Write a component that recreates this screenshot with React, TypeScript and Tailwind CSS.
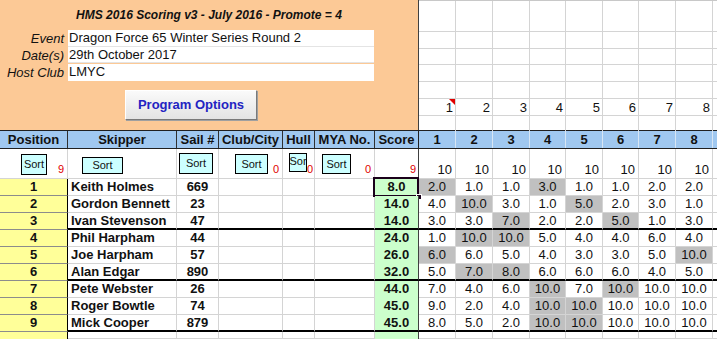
import React from 'react';

// Excel-style scoring sheet: HMS 2016 scoring, DF65 winter series

const GRID =
  'grid grid-cols-[68px_109px_42px_64px_32px_60px_44px_37px_37px_37px_36px_37px_36px_37px_37px_1fr]';
const RACE_GRID = 'grid grid-cols-[37px_37px_37px_36px_37px_36px_37px_37px_1fr]';

interface Entry {
  pos: number;
  name: string;
  sail: string;
  score: string;
  results: string[];
  discards: number[];
}

const entries: Entry[] = [
  { pos: 1, name: 'Keith Holmes', sail: '669', score: '8.0', results: ['2.0', '1.0', '1.0', '3.0', '1.0', '1.0', '2.0', '2.0'], discards: [0, 3] },
  { pos: 2, name: 'Gordon Bennett', sail: '23', score: '14.0', results: ['4.0', '10.0', '3.0', '1.0', '5.0', '2.0', '3.0', '1.0'], discards: [1, 4] },
  { pos: 3, name: 'Ivan Stevenson', sail: '47', score: '14.0', results: ['3.0', '3.0', '7.0', '2.0', '2.0', '5.0', '1.0', '3.0'], discards: [2, 5] },
  { pos: 4, name: 'Phil Harpham', sail: '44', score: '24.0', results: ['1.0', '10.0', '10.0', '5.0', '4.0', '4.0', '6.0', '4.0'], discards: [1, 2] },
  { pos: 5, name: 'Joe Harpham', sail: '57', score: '26.0', results: ['6.0', '6.0', '5.0', '4.0', '3.0', '3.0', '5.0', '10.0'], discards: [0, 7] },
  { pos: 6, name: 'Alan Edgar', sail: '890', score: '32.0', results: ['5.0', '7.0', '8.0', '6.0', '6.0', '6.0', '4.0', '5.0'], discards: [1, 2] },
  { pos: 7, name: 'Pete Webster', sail: '26', score: '44.0', results: ['7.0', '4.0', '6.0', '10.0', '7.0', '10.0', '10.0', '10.0'], discards: [3, 5] },
  { pos: 8, name: 'Roger Bowtle', sail: '74', score: '45.0', results: ['9.0', '2.0', '4.0', '10.0', '10.0', '10.0', '10.0', '10.0'], discards: [3, 4] },
  { pos: 9, name: 'Mick Cooper', sail: '879', score: '45.0', results: ['8.0', '5.0', '2.0', '10.0', '10.0', '10.0', '10.0', '10.0'], discards: [3, 4] },
];

const SortButton: React.FC<{ className: string; label?: string }> = ({ className, label = 'Sort' }) => (
  <div
    className={`flex shrink-0 items-center justify-center overflow-hidden border border-black bg-[#ccffff] text-[11px] leading-none text-[#111] ${className}`}
  >
    {label}
  </div>
);

const RedCount: React.FC<{ value: string; className?: string }> = ({ value, className = '' }) => (
  <span className={`ml-auto self-end text-[11px] leading-none text-[#e00000] ${className}`}>{value}</span>
);

const TopPanel: React.FC = () => (
  <div className="flex h-[130px]">
    {/* orange info block */}
    <div className="flex w-[419px] flex-col border-r border-[#404040] bg-[#fcc996]">
      <div className="flex h-[30px] items-center justify-center text-[12px] font-bold italic text-[#111]">
        HMS 2016 Scoring v3 - July 2016 - Promote = 4
      </div>
      {[
        ['Event', 'Dragon Force 65 Winter Series Round 2', 'h-[17px] border-b border-[#e4e4e4]'],
        ['Date(s)', '29th October 2017', 'h-[16px] border-b border-[#e4e4e4]'],
        ['Host Club', 'LMYC', 'h-[17px]'],
      ].map(([label, value, h]) => (
        <div key={label} className="flex">
          <div className="w-[68px] pr-[4px] text-right text-[13px] italic leading-[17px] text-[#111]">{label}</div>
          <div className={`w-[306px] bg-white pl-[1px] text-[13px] leading-[16px] text-[#111] ${h}`}>{value}</div>
        </div>
      ))}
      <button className="ml-[125px] mt-[9px] flex h-[30px] w-[132px] items-center justify-center border border-t-white border-l-white border-r-[#7a7a7a] border-b-[#7a7a7a] bg-gradient-to-b from-[#fafafa] to-[#e4e4e4] text-[13px] font-bold text-[#2323c2] shadow-[1px_1px_0_#a0a0a0]">
        Program Options
      </button>
    </div>

    {/* empty sheet cells, race numbers */}
    <div className={`${RACE_GRID} flex-1 grid-rows-[31px_17px_16px_17px_17px_17px_15px] border-t border-[#c8c8c8]`}>
      {Array.from({ length: 7 }).map((_, r) =>
        Array.from({ length: 9 }).map((__, c) => (
          <div
            key={`${r}-${c}`}
            className={`relative flex items-end justify-end border-[#d4d4d4] pr-[2px] text-[13px] leading-[15px] text-[#111] ${
              r < 6 ? 'border-b' : ''
            } ${c < 8 ? 'border-r' : ''}`}
          >
            {r === 5 && c < 8 ? c + 1 : ''}
            {r === 5 && c === 0 && (
              <svg className="absolute right-0 top-0" width="6" height="6" viewBox="0 0 6 6">
                <polygon points="0,0 6,0 6,6" fill="#e00000" />
              </svg>
            )}
          </div>
        )),
      )}
    </div>
  </div>
);

const HeaderRow: React.FC = () => {
  const left = ['Position', 'Skipper', 'Sail #', 'Club/City', 'Hull', 'MYA No.', 'Score'];
  return (
    <div className={`${GRID} h-[19px] border-y border-[#202020] bg-[#a0c8f0] text-[13px] font-bold leading-[17px] text-[#111]`}>
      {left.map((h, i) => (
        <div
          key={h}
          className={`whitespace-nowrap text-center ${i === 6 ? 'border-r border-[#202020]' : 'border-r border-[#303030]'}`}
        >
          {h}
        </div>
      ))}
      {Array.from({ length: 8 }).map((_, i) => (
        <div key={i} className="border-r border-[#d8e6f4] text-center">
          {i + 1}
        </div>
      ))}
      <div />
    </div>
  );
};

const SortRow: React.FC = () => (
  <div className={`${GRID} h-[30px] border-b border-[#d4d4d4] bg-white`}>
    <div className="flex border-r border-[#d4d4d4] pr-[3px] pb-[3px]">
      <SortButton className="ml-[21px] mt-[5px] h-[21px] w-[26px]" />
      <RedCount value="9" />
    </div>
    <div className="flex border-r border-[#d4d4d4]">
      <SortButton className="ml-[14px] mt-[8px] h-[17px] w-[41px]" />
    </div>
    <div className="flex border-r border-[#d4d4d4]">
      <SortButton className="ml-[2px] mt-[4px] h-[21px] w-[34px]" />
    </div>
    <div className="flex border-r border-[#d4d4d4] pr-[3px] pb-[3px]">
      <SortButton className="ml-[16px] mt-[5px] h-[20px] w-[33px]" />
      <RedCount value="0" />
    </div>
    <div className="flex border-r border-[#d4d4d4] pr-[3px] pb-[3px]">
      <SortButton className="relative z-10 ml-[6px] mt-[4px] h-[19px] w-[18px] !items-start pt-[2px]" label="Sor" />
      <RedCount value="0" className="-ml-[4px]" />
    </div>
    <div className="flex border-r border-[#d4d4d4] pr-[3px] pb-[3px]">
      <SortButton className="ml-[7px] mt-[5px] h-[20px] w-[29px]" />
      <RedCount value="0" />
    </div>
    <div className="flex border-r border-[#404040] pr-[2px] pb-[3px]">
      <RedCount value="9" />
    </div>
    {Array.from({ length: 8 }).map((_, i) => (
      <div key={i} className="flex items-end justify-end border-r border-[#d4d4d4] pr-[3px] text-[13px] leading-[16px] text-[#111]">
        10
      </div>
    ))}
    <div />
  </div>
);

const DataRow: React.FC<{ e?: Entry; thick?: boolean; h?: string }> = ({ e, thick, h = 'h-[17px]' }) => {
  const b = thick ? 'border-b-2 border-b-black' : 'border-b border-b-[#d4d4d4]';
  return (
    <div className={`${GRID} ${h} text-[13px] leading-[15px] text-[#111]`}>
      <div className={`border-r border-r-black bg-[#ffff99] text-center font-bold ${e ? 'border-b border-b-[#8c8c8c]' : ''}`}>
        {e?.pos}
      </div>
      <div className={`whitespace-nowrap border-r border-r-[#d4d4d4] pl-[3px] font-bold ${b}`}>{e?.name}</div>
      <div className={`border-r border-r-[#d4d4d4] text-center font-bold ${b}`}>{e?.sail}</div>
      <div className={`border-r border-r-[#d4d4d4] ${b}`} />
      <div className={`border-r border-r-[#d4d4d4] ${b}`} />
      <div className={`border-r border-r-[#d4d4d4] ${b}`} />
      <div
        className={`relative border-r border-r-[#404040] bg-[#ccffcc] text-center font-bold ${
          thick ? 'border-b-2 border-b-black' : ''
        }`}
      >
        {e?.score}
        {e?.pos === 1 && (
          <>
            <div className="absolute -left-[2px] -top-[2px] -right-[1px] -bottom-[1px] border-2 border-[#1a001a]" />
            <div className="absolute -bottom-[4px] -right-[4px] h-[6px] w-[6px] border border-white bg-[#1a001a]" />
          </>
        )}
      </div>
      {Array.from({ length: 8 }).map((_, i) => (
        <div
          key={i}
          className={`border-r border-r-[#d4d4d4] text-center ${b} ${e?.discards.includes(i) ? 'bg-[#c0c0c0]' : ''}`}
        >
          {e?.results[i]}
        </div>
      ))}
      <div className={b} />
    </div>
  );
};

export default function App() {
  return (
    <div className="h-[339px] w-[717px] overflow-hidden bg-white font-['Liberation_Sans',Arial,sans-serif]">
      <TopPanel />
      <HeaderRow />
      <SortRow />
      {entries.map((e) => (
        <DataRow key={e.pos} e={e} thick={e.pos % 3 === 0} />
      ))}
      <DataRow h="h-[7px]" />
    </div>
  );
}
